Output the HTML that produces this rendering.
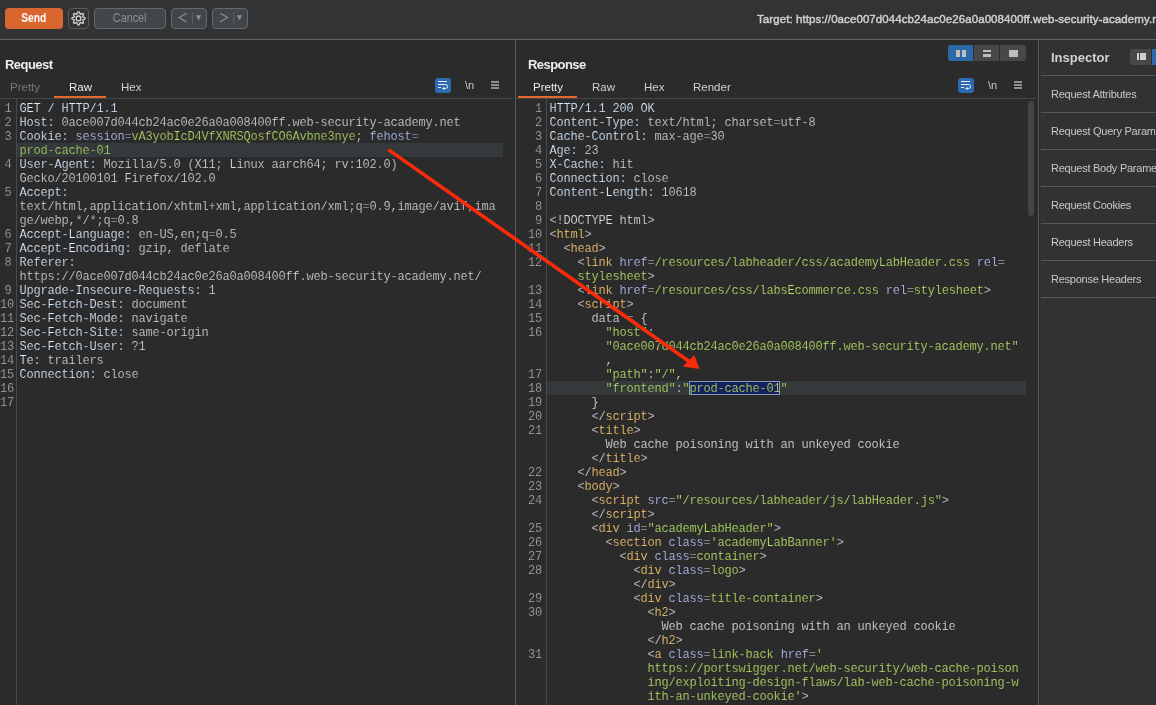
<!DOCTYPE html>
<html><head><meta charset="utf-8">
<style>
*{box-sizing:border-box}
html,body{margin:0;padding:0}
body{width:1156px;height:705px;overflow:hidden;position:relative;background:#2b2b2b;will-change:transform;font-family:"Liberation Sans",sans-serif;}
.abs{position:absolute}
#toolbar{left:0;top:0;width:1156px;height:39px;background:#323335}
#tbline{left:0;top:39px;width:1156px;height:1px;background:#626262}
.btn{position:absolute;top:8px;height:21px;border-radius:4px;font-size:12px;line-height:19px;text-align:center}
#send{left:5px;width:58px;background:#d9662f;color:#fff;font-weight:bold;line-height:21px}
#gear{left:68px;width:21px;border:1px solid #5a5b5c;background:#323335}
#cancel{left:94px;width:72px;border:1px solid #66686a;background:#434648;color:#8f9091}
.nav{width:36px;border:1px solid #66686a;background:#434648}
#target{left:757px;top:13px;font-size:11.5px;font-weight:normal;-webkit-text-stroke:0.45px #cfcfcf;color:#cfcfcf;white-space:nowrap;letter-spacing:0.08px}
.title{position:absolute;top:57px;font-size:13px;font-weight:bold;color:#eeeeee;letter-spacing:-0.55px}
.tab{position:absolute;top:81px;font-size:11.5px;color:#cfcfcf}
.uline{position:absolute;top:96px;height:2px;background:#e2692f}
.tabline{position:absolute;top:98px;height:1px;background:#464646}
.gut{position:absolute;top:99px;width:1px;height:606px;background:#4a4a4a}
.vsep{position:absolute;top:40px;width:1px;height:665px;background:#5c5c5c}
.nums{position:absolute;top:102px;-webkit-text-stroke:0.2px #2b2b2b;font-family:"Liberation Mono",monospace;font-size:12px;letter-spacing:-0.2px;line-height:14px;color:#ababab;text-align:right;white-space:pre}
.code{position:absolute;top:102px;-webkit-text-stroke:0.2px #2b2b2b;font-family:"Liberation Mono",monospace;font-size:12px;letter-spacing:-0.2px;line-height:14px;color:#c9c9c9;white-space:pre}
.nums div,.code div{height:14px}
.hn{color:#dcefff}
.hv{color:#d6d6d6}
.ck{color:#b8c4fa}
.cv{color:#b4d866}
.p{color:#dedede}
.t{color:#fccb72}
.a{color:#b8c4fa}
.s{color:#b8e068}
.x{color:#e0e0e0}
.sel{color:#b8de6a}
.hl{position:absolute;height:14px;background:#34393b}
.wrapbtn{position:absolute;top:78px;width:16px;height:15px;border-radius:3px;background:#2c6bb0}
.nl{position:absolute;top:79px;font-size:11px;color:#c8c8c8}
.ham{position:absolute;top:81px;width:8px;height:9px}
.ham i{display:block;height:1.5px;background:#8e8e8e;margin-bottom:1.5px}
#insp{left:1040px;top:40px;width:116px;height:665px;background:#313234}
.irow{position:absolute;left:1041px;width:115px;height:1px;background:#575757}
.itxt{position:absolute;left:1051px;font-size:11px;color:#c8c8c8;white-space:nowrap;margin-top:1px;letter-spacing:-0.25px}
</style></head><body>
<div id="toolbar" class="abs"></div>
<div id="tbline" class="abs"></div>
<div id="send" class="btn"><span style="display:inline-block;transform:scaleX(.85)">Send</span></div>
<div id="gear" class="btn"><svg width="19" height="19" viewBox="0 0 19 19" style="position:absolute;left:0;top:0"><g fill="none" stroke="#d2d2d2" stroke-width="1.3" stroke-linejoin="round"><path d="M8.92 2.83 L10.08 2.83 L11.18 5.33 L13.74 4.34 L14.56 5.16 L13.57 7.72 L16.07 8.82 L16.07 9.98 L13.57 11.08 L14.56 13.64 L13.74 14.46 L11.18 13.47 L10.08 15.97 L8.92 15.97 L7.82 13.47 L5.26 14.46 L4.44 13.64 L5.43 11.08 L2.93 9.98 L2.93 8.82 L5.43 7.72 L4.44 5.16 L5.26 4.34 L7.82 5.33 Z"/><circle cx="9.5" cy="9.4" r="2.4"/></g></svg></div>
<div id="cancel" class="btn"><span style="display:inline-block;transform:scaleX(.9)">Cancel</span></div>
<div class="btn nav" style="left:171px"><svg width="34" height="19" style="position:absolute;left:0;top:0"><path d="M14.6 4.3 L7.2 8.6 L14.6 12.9" fill="none" stroke="#8e8f90" stroke-width="1.2"/><line x1="20.6" y1="3.3" x2="20.6" y2="14.7" stroke="#5f6163" stroke-width="1"/><path d="M24 6.3 L29.2 6.3 L26.6 11.4 Z" fill="#8e8f90"/></svg></div>
<div class="btn nav" style="left:212px"><svg width="34" height="19" style="position:absolute;left:0;top:0"><path d="M7.2 4.3 L14.6 8.6 L7.2 12.9" fill="none" stroke="#8e8f90" stroke-width="1.2"/><line x1="20.8" y1="3.3" x2="20.8" y2="14.7" stroke="#5f6163" stroke-width="1"/><path d="M23.9 6.3 L29.1 6.3 L26.5 11.4 Z" fill="#8e8f90"/></svg></div>
<div id="target" class="abs">Target: https://0ace007d044cb24ac0e26a0a008400ff.web-security-academy.net</div>

<!-- Request panel -->
<div class="title" style="left:5px">Request</div>
<div class="tab" style="left:10px;color:#767676">Pretty</div>
<div class="tab" style="left:69px;color:#ececec">Raw</div>
<div class="tab" style="left:121px">Hex</div>
<div class="uline" style="left:54px;width:52px"></div>
<div class="tabline" style="left:0;width:513px"></div>
<div class="wrapbtn" style="left:435px"><svg width="16" height="15" style="position:absolute;left:0;top:0"><g fill="none" stroke="#e8eef5" stroke-width="1"><line x1="3" y1="3.5" x2="12" y2="3.5"/><path d="M3 6.5 H10.5 A2 2 0 0 1 10.5 10.5 H8.5"/><line x1="3" y1="9.5" x2="6" y2="9.5"/></g><path d="M7.2 10.5 L9.4 8.8 L9.4 12.2 Z" fill="#e8eef5"/></svg></div>
<div class="nl" style="left:465px">\n</div>
<div class="ham" style="left:491px"><i></i><i></i><i></i></div>
<div class="gut" style="left:16px"></div>
<div class="hl" style="left:17px;top:143px;width:486px"></div>
<div class="nums" style="left:0;width:11.5px"><div>1</div><div>2</div><div>3</div><div></div><div>4</div><div></div><div>5</div><div></div><div></div><div>6</div><div>7</div><div>8</div><div></div><div>9</div><div>10</div><div>11</div><div>12</div><div>13</div><div>14</div><div>15</div><div>16</div><div>17</div></div>
<div class="code" style="left:19.5px"><div><span class="hn">GET / HTTP/1.1</span></div><div><span class="hn">Host:</span> <span class="hv">0ace007d044cb24ac0e26a0a008400ff.web-security-academy.net</span></div><div><span class="hn">Cookie:</span> <span class="ck">session=</span><span class="cv">vA3yobIcD4VfXNRSQosfCO6Avbne3nye</span><span class="hv">; </span><span class="ck">fehost=</span></div><div><span class="cv">prod-cache-01</span></div><div><span class="hn">User-Agent:</span> <span class="hv">Mozilla/5.0 (X11; Linux aarch64; rv:102.0)</span></div><div><span class="hv">Gecko/20100101 Firefox/102.0</span></div><div><span class="hn">Accept:</span></div><div><span class="hv">text/html,application/xhtml+xml,application/xml;q=0.9,image/avif,ima</span></div><div><span class="hv">ge/webp,*/*;q=0.8</span></div><div><span class="hn">Accept-Language:</span> <span class="hv">en-US,en;q=0.5</span></div><div><span class="hn">Accept-Encoding:</span> <span class="hv">gzip, deflate</span></div><div><span class="hn">Referer:</span></div><div><span class="hv">https://0ace007d044cb24ac0e26a0a008400ff.web-security-academy.net/</span></div><div><span class="hn">Upgrade-Insecure-Requests:</span> <span class="hv">1</span></div><div><span class="hn">Sec-Fetch-Dest:</span> <span class="hv">document</span></div><div><span class="hn">Sec-Fetch-Mode:</span> <span class="hv">navigate</span></div><div><span class="hn">Sec-Fetch-Site:</span> <span class="hv">same-origin</span></div><div><span class="hn">Sec-Fetch-User:</span> <span class="hv">?1</span></div><div><span class="hn">Te:</span> <span class="hv">trailers</span></div><div><span class="hn">Connection:</span> <span class="hv">close</span></div><div></div><div></div></div>

<div class="vsep" style="left:515px"></div>

<!-- Response panel -->
<div class="title" style="left:528px">Response</div>
<div class="tab" style="left:533px;color:#ececec">Pretty</div>
<div class="tab" style="left:592px">Raw</div>
<div class="tab" style="left:644px">Hex</div>
<div class="tab" style="left:693px">Render</div>
<div class="uline" style="left:518px;width:59px"></div>
<div class="tabline" style="left:516px;width:520px"></div>
<div class="wrapbtn" style="left:958px"><svg width="16" height="15" style="position:absolute;left:0;top:0"><g fill="none" stroke="#e8eef5" stroke-width="1"><line x1="3" y1="3.5" x2="12" y2="3.5"/><path d="M3 6.5 H10.5 A2 2 0 0 1 10.5 10.5 H8.5"/><line x1="3" y1="9.5" x2="6" y2="9.5"/></g><path d="M7.2 10.5 L9.4 8.8 L9.4 12.2 Z" fill="#e8eef5"/></svg></div>
<div class="nl" style="left:988px">\n</div>
<div class="ham" style="left:1014px"><i></i><i></i><i></i></div>
<div class="gut" style="left:546px"></div>
<div class="hl" style="left:547px;top:381px;width:479px"></div>
<div class="abs" style="left:689px;top:381px;width:91px;height:14px;background:#13215c;border:1px solid #8c99bb"></div>
<div class="nums" style="left:516px;width:26px"><div>1</div><div>2</div><div>3</div><div>4</div><div>5</div><div>6</div><div>7</div><div>8</div><div>9</div><div>10</div><div>11</div><div>12</div><div></div><div>13</div><div>14</div><div>15</div><div>16</div><div></div><div></div><div>17</div><div>18</div><div>19</div><div>20</div><div>21</div><div></div><div></div><div>22</div><div>23</div><div>24</div><div></div><div>25</div><div>26</div><div>27</div><div>28</div><div></div><div>29</div><div>30</div><div></div><div></div><div>31</div><div></div><div></div><div></div><div></div></div>
<div class="code" style="left:549.5px"><div><span class="hn">HTTP/1.1 200 OK</span></div><div><span class="hn">Content-Type:</span> <span class="hv">text/html; charset=utf-8</span></div><div><span class="hn">Cache-Control:</span> <span class="hv">max-age=30</span></div><div><span class="hn">Age:</span> <span class="hv">23</span></div><div><span class="hn">X-Cache:</span> <span class="hv">hit</span></div><div><span class="hn">Connection:</span> <span class="hv">close</span></div><div><span class="hn">Content-Length:</span> <span class="hv">10618</span></div><div></div><div><span class="x">&lt;!DOCTYPE html&gt;</span></div><div><span class="p">&lt;</span><span class="t">html</span><span class="p">&gt;</span></div><div>  <span class="p">&lt;</span><span class="t">head</span><span class="p">&gt;</span></div><div>    <span class="p">&lt;</span><span class="t">link</span> <span class="a">href</span><span class="p">=</span><span class="s">/resources/labheader/css/academyLabHeader.css</span> <span class="a">rel</span><span class="p">=</span></div><div>    <span class="s">stylesheet</span><span class="p">&gt;</span></div><div>    <span class="p">&lt;</span><span class="t">link</span> <span class="a">href</span><span class="p">=</span><span class="s">/resources/css/labsEcommerce.css</span> <span class="a">rel</span><span class="p">=</span><span class="s">stylesheet</span><span class="p">&gt;</span></div><div>    <span class="p">&lt;</span><span class="t">script</span><span class="p">&gt;</span></div><div>      <span class="x">data = {</span></div><div>        <span class="s">"host"</span><span class="p">:</span></div><div>        <span class="s">"0ace007d044cb24ac0e26a0a008400ff.web-security-academy.net"</span></div><div>        <span class="p">,</span></div><div>        <span class="s">"path"</span><span class="p">:</span><span class="s">"/"</span><span class="p">,</span></div><div>        <span class="s">"frontend"</span><span class="p">:</span><span class="s">"</span><span class="sel">prod-cache-01</span><span class="s">"</span></div><div>      <span class="x">}</span></div><div>      <span class="p">&lt;/</span><span class="t">script</span><span class="p">&gt;</span></div><div>      <span class="p">&lt;</span><span class="t">title</span><span class="p">&gt;</span></div><div>        <span class="x">Web cache poisoning with an unkeyed cookie</span></div><div>      <span class="p">&lt;/</span><span class="t">title</span><span class="p">&gt;</span></div><div>    <span class="p">&lt;/</span><span class="t">head</span><span class="p">&gt;</span></div><div>    <span class="p">&lt;</span><span class="t">body</span><span class="p">&gt;</span></div><div>      <span class="p">&lt;</span><span class="t">script</span> <span class="a">src</span><span class="p">=</span><span class="s">"/resources/labheader/js/labHeader.js"</span><span class="p">&gt;</span></div><div>      <span class="p">&lt;/</span><span class="t">script</span><span class="p">&gt;</span></div><div>      <span class="p">&lt;</span><span class="t">div</span> <span class="a">id</span><span class="p">=</span><span class="s">"academyLabHeader"</span><span class="p">&gt;</span></div><div>        <span class="p">&lt;</span><span class="t">section</span> <span class="a">class</span><span class="p">=</span><span class="s">'academyLabBanner'</span><span class="p">&gt;</span></div><div>          <span class="p">&lt;</span><span class="t">div</span> <span class="a">class</span><span class="p">=</span><span class="s">container</span><span class="p">&gt;</span></div><div>            <span class="p">&lt;</span><span class="t">div</span> <span class="a">class</span><span class="p">=</span><span class="s">logo</span><span class="p">&gt;</span></div><div>            <span class="p">&lt;/</span><span class="t">div</span><span class="p">&gt;</span></div><div>            <span class="p">&lt;</span><span class="t">div</span> <span class="a">class</span><span class="p">=</span><span class="s">title-container</span><span class="p">&gt;</span></div><div>              <span class="p">&lt;</span><span class="t">h2</span><span class="p">&gt;</span></div><div>                <span class="x">Web cache poisoning with an unkeyed cookie</span></div><div>              <span class="p">&lt;/</span><span class="t">h2</span><span class="p">&gt;</span></div><div>              <span class="p">&lt;</span><span class="t">a</span> <span class="a">class</span><span class="p">=</span><span class="s">link-back</span> <span class="a">href</span><span class="p">=</span><span class="s">'</span></div><div>              <span class="s">https://portswigger.net/web-security/web-cache-poison</span></div><div>              <span class="s">ing/exploiting-design-flaws/lab-web-cache-poisoning-w</span></div><div>              <span class="s">ith-an-unkeyed-cookie'</span><span class="p">&gt;</span></div><div>              <span class="s"></span></div></div>
<div class="abs" style="left:1028px;top:101px;width:6px;height:115px;border-radius:3px;background:#454545"></div>
<div class="abs" style="left:948px;top:45px;width:78px;height:16px;border-radius:3px;background:#484848;overflow:hidden"><div style="position:absolute;left:0;top:0;width:25px;height:16px;background:#2c69a9"></div><div style="position:absolute;left:25px;top:0;width:1px;height:16px;background:#2f2f2f"></div><div style="position:absolute;left:51px;top:0;width:1px;height:16px;background:#2f2f2f"></div>
<div style="position:absolute;left:8px;top:4.5px;width:4px;height:7px;background:#bdbdbd"></div><div style="position:absolute;left:14px;top:4.5px;width:4px;height:7px;background:#bdbdbd"></div>
<div style="position:absolute;left:35px;top:4.5px;width:8px;height:2.5px;background:#bdbdbd"></div><div style="position:absolute;left:35px;top:9px;width:8px;height:2.5px;background:#bdbdbd"></div>
<div style="position:absolute;left:61px;top:4.5px;width:8.5px;height:7px;background:#bdbdbd"></div></div>

<div class="vsep" style="left:1038px"></div>
<div id="insp" class="abs"></div>
<div class="title" style="left:1051px;top:50px;color:#d2d2d2;letter-spacing:0">Inspector</div>
<div class="abs" style="left:1130px;top:49px;width:40px;height:16px;border-radius:3px;background:#484848;overflow:hidden"><div style="position:absolute;left:22px;top:0;width:30px;height:16px;background:#2c69a9"></div><div style="position:absolute;left:21px;top:0;width:1px;height:16px;background:#2f2f2f"></div>
<div style="position:absolute;left:7px;top:4px;width:1.5px;height:7px;background:#d0d0d0"></div><div style="position:absolute;left:10px;top:4px;width:5.5px;height:7px;background:#cfcfcf"></div></div>
<div class="irow" style="top:75px"></div>
<div class="irow" style="top:112px"></div>
<div class="irow" style="top:149px"></div>
<div class="irow" style="top:186px"></div>
<div class="irow" style="top:223px"></div>
<div class="irow" style="top:260px"></div>
<div class="irow" style="top:297px"></div>
<div class="itxt" style="top:87px">Request Attributes</div>
<div class="itxt" style="top:124px">Request Query Parameters</div>
<div class="itxt" style="top:161px">Request Body Parameters</div>
<div class="itxt" style="top:198px">Request Cookies</div>
<div class="itxt" style="top:235px">Request Headers</div>
<div class="itxt" style="top:272px">Response Headers</div>

<svg class="abs" style="left:0;top:0" width="1156" height="705">
<line x1="388.4" y1="149.6" x2="690" y2="362" stroke="#fb2a0a" stroke-width="3.6" stroke-linecap="butt"/>
<path d="M699.5 369 L682.7 366.6 L694.3 355 Z" fill="#fb2a0a"/>
</svg>
</body></html>
